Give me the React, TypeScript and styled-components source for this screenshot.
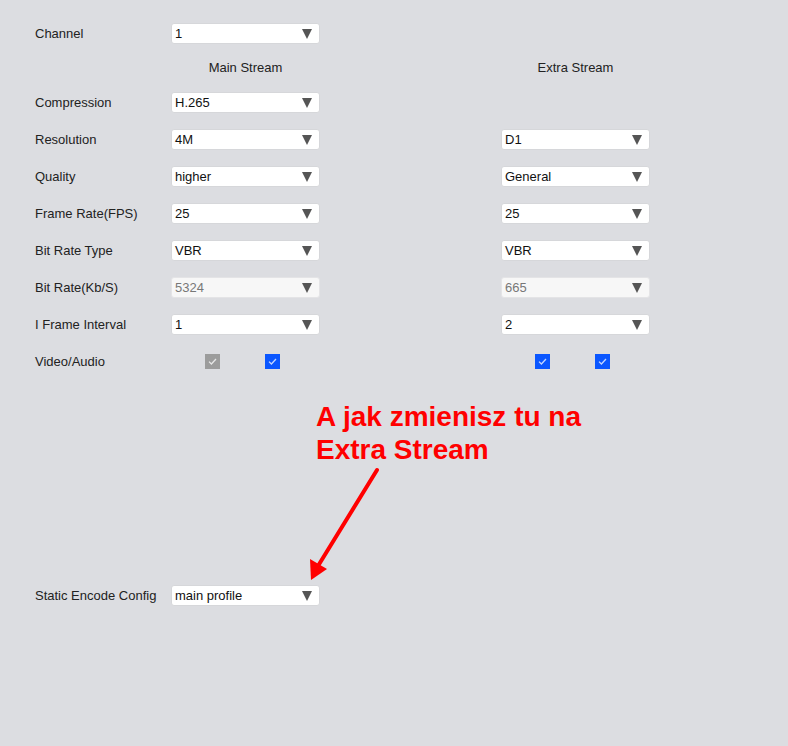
import React from "react"
import styled, { createGlobalStyle } from "styled-components"

const Global = createGlobalStyle`
  html, body {
    margin: 0;
    padding: 0;
    background: #dcdde1;
  }
  body {
    font-family: "Liberation Sans", Arial, sans-serif;
    font-size: 13px;
    color: #222;
  }
`;

const Page = styled.div`
  position: relative;
  width: 788px;
  height: 746px;
  box-sizing: border-box;
  padding: 23px 0 0 35px;
`;

const Form = styled.div`
  display: grid;
  grid-template-columns: 136px 149px 181px 149px;
  row-gap: 16px;
  align-items: center;
`;

const Label = styled.div`
  grid-column: 1;
  line-height: 21px;
  white-space: nowrap;
`;

const Heading = styled.div<{ $col: number }>`
  grid-column: ${p => p.$col};
  text-align: center;
  line-height: 16px;
  color: #222;
`;

const SelectBox = styled.div<{ $col: number; $disabled?: boolean }>`
  grid-column: ${p => p.$col};
  height: 21px;
  box-sizing: border-box;
  display: flex;
  align-items: center;
  padding: 0 7px 0 3px;
  border: 1px solid ${p => (p.$disabled ? "#e4e4e6" : "#d6d7da")};
  border-radius: 3px;
  background: ${p => (p.$disabled ? "#f7f7f7" : "#fff")};
  color: ${p => (p.$disabled ? "#777" : "#111")};
`;

const Value = styled.span`
  flex: 1;
  line-height: 19px;
`;

const Caret = styled.span`
  width: 0;
  height: 0;
  border-left: 5px solid transparent;
  border-right: 5px solid transparent;
  border-top: 10px solid #555;
`;

const Checks = styled.div<{ $col: number }>`
  grid-column: ${p => p.$col};
  display: flex;
  gap: 45px;
  padding-left: 34px;
  height: 18px;
  align-items: center;
`;

const Check = styled.span<{ $muted?: boolean }>`
  width: 15px;
  height: 15px;
  display: flex;
  align-items: center;
  justify-content: center;
  background: ${p => (p.$muted ? "#9c9c9c" : "#0a56ff")};
`;

const Spacer = styled.div`
  grid-column: 1 / -1;
  height: 181px;
`;

const Note = styled.div`
  position: absolute;
  left: 316px;
  top: 400px;
  font-family: "Liberation Sans", Arial, sans-serif;
  font-weight: bold;
  font-size: 28px;
  line-height: 33px;
  color: #ff0000;
`;

const Arrow = styled.svg`
  position: absolute;
  left: 300px;
  top: 460px;
`;

type SelectProps = { col: number; value: string; disabled?: boolean }

const Select = ({ col, value, disabled }: SelectProps) => (
  <SelectBox $col={col} $disabled={disabled}>
    <Value>{value}</Value>
    <Caret />
  </SelectBox>
)

const Tick = () => (
  <svg width="9" height="7" viewBox="0 0 9 7">
    <path d="M1 3.6 L3.4 6 L8 1" fill="none" stroke="rgba(255,255,255,0.75)" strokeWidth="1.3" />
  </svg>
)

const rows: [string, string, string | null, boolean?][] = [
  ["Compression", "H.265", null],
  ["Resolution", "4M", "D1"],
  ["Quality", "higher", "General"],
  ["Frame Rate(FPS)", "25", "25"],
  ["Bit Rate Type", "VBR", "VBR"],
  ["Bit Rate(Kb/S)", "5324", "665", true],
  ["I Frame Interval", "1", "2"],
]

export default function App() {
  return (
    <Page>
      <Global />
      <Form>
        <Label>Channel</Label>
        <Select col={2} value="1" />

        <Heading $col={2}>Main Stream</Heading>
        <Heading $col={4}>Extra Stream</Heading>

        {rows.map(([label, main, extra, disabled]) => (
          <React.Fragment key={label}>
            <Label>{label}</Label>
            <Select col={2} value={main} disabled={disabled} />
            {extra !== null && <Select col={4} value={extra} disabled={disabled} />}
          </React.Fragment>
        ))}

        <Label>Video/Audio</Label>
        <Checks $col={2}>
          <Check $muted><Tick /></Check>
          <Check><Tick /></Check>
        </Checks>
        <Checks $col={4}>
          <Check><Tick /></Check>
          <Check><Tick /></Check>
        </Checks>

        <Spacer />

        <Label>Static Encode Config</Label>
        <Select col={2} value="main profile" />
      </Form>

      <Note>
        A jak zmienisz tu na
        <br />
        Extra Stream
      </Note>
      <Arrow width="90" height="125" viewBox="0 0 90 125">
        <line x1="77" y1="10" x2="18" y2="106" stroke="#ff0000" strokeWidth="4" strokeLinecap="round" />
        <polygon points="11,120 10,99 27,109" fill="#ff0000" />
      </Arrow>
    </Page>
  )
}
